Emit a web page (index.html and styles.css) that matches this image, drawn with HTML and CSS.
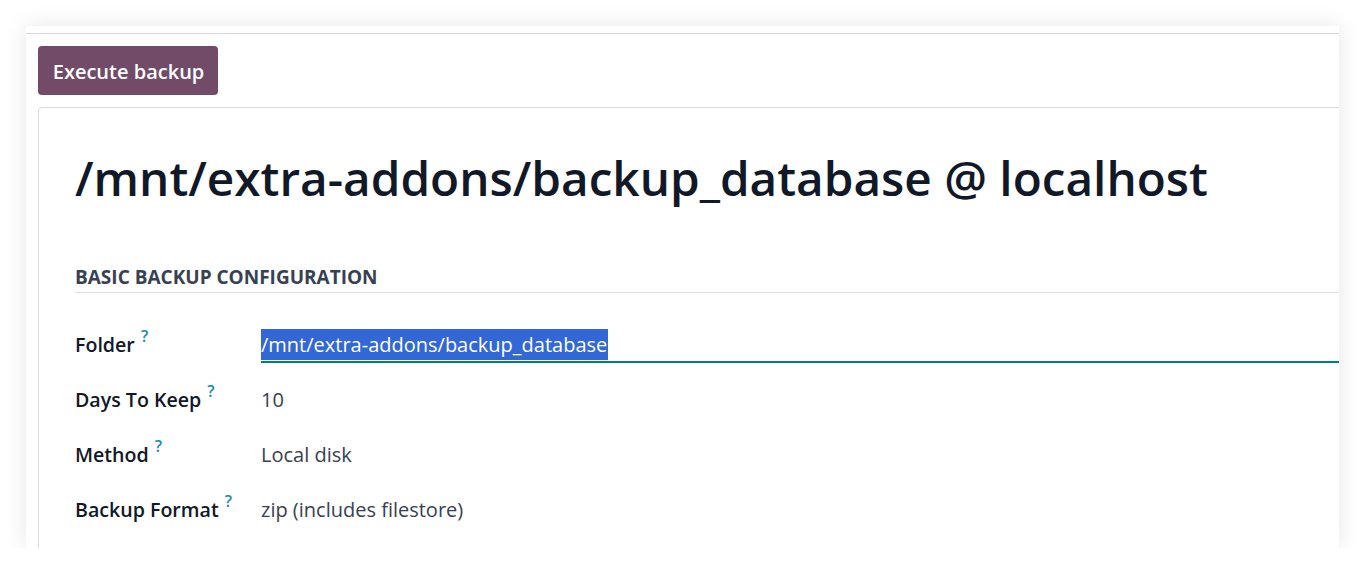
FILE: index.html
```html
<!DOCTYPE html>
<html lang="en">
<head>
<meta charset="utf-8">
<title>Backup</title>
<link rel="stylesheet" href="styles.css">
</head>
<body>
<div class="panel">
  <div class="topbar"></div>
  <div class="actions">
    <button class="btn-primary" type="button">Execute backup</button>
  </div>
  <div class="sheet">
    <h1 class="title">/mnt/extra-addons/backup_database @ localhost</h1>
    <div class="section">
      <div class="section-head">BASIC BACKUP CONFIGURATION</div>
      <div class="rows">
        <div class="row">
          <div class="label">Folder <sup class="help">?</sup></div>
          <div class="value value-input"><span class="selected">/mnt/extra-addons/backup_database</span></div>
        </div>
        <div class="row">
          <div class="label">Days To Keep <sup class="help">?</sup></div>
          <div class="value">10</div>
        </div>
        <div class="row">
          <div class="label">Method <sup class="help">?</sup></div>
          <div class="value">Local disk</div>
        </div>
        <div class="row">
          <div class="label">Backup Format <sup class="help">?</sup></div>
          <div class="value">zip (includes filestore)</div>
        </div>
      </div>
    </div>
  </div>
</div>
</body>
</html>
```

FILE: styles.css
```css
* { box-sizing: border-box; }
html, body {
  margin: 0;
  padding: 0;
  background: #ffffff;
  font-family: "Open Sans", "Noto Sans", sans-serif;
}
.panel {
  margin: 26px 0 0 26px;
  width: 1313px;
  height: 522px;
  background: #ffffff;
  box-shadow: 0 0 22px rgba(0, 0, 0, 0.10);
  overflow: hidden;
}
.topbar {
  height: 8px;
  border-bottom: 1px solid #d8d8d8;
}
.actions {
  padding: 12px 0 0 12px;
}
.btn-primary {
  display: block;
  height: 49px;
  width: 180px;
  background: #714b67;
  color: #ffffff;
  border: none;
  border-radius: 4px;
  font-family: inherit;
  font-size: 20px;
  font-weight: 600;
  padding: 0 0 0 1px;
  line-height: 51px;
}
.sheet {
  margin: 12px -40px 0 12px;
  border: 1px solid #d8dadd;
  border-radius: 4px;
  padding: 27px 36px 0 36px;
  height: 520px;
}
.title {
  margin: 0;
  font-size: 47.7px;
  font-weight: 600;
  color: #111827;
  line-height: 86px;
}
.section {
  margin-top: 44px;
}
.section-head {
  font-size: 19px;
  font-weight: 700;
  color: #374151;
  padding-bottom: 3px;
  border-bottom: 1px solid #dcdfe3;
  line-height: 24px;
}
.rows {
  padding-top: 36px;
  display: flex;
  flex-direction: column;
}
.row {
  display: grid;
  grid-template-columns: 186px 1fr;
  height: 55px;
  align-items: start;
}
.label {
  font-size: 19.6px;
  font-weight: 600;
  color: #111827;
  line-height: 32px;
}
.help {
  color: #1a8aad;
  font-size: 16px;
  font-weight: 600;
  vertical-align: top;
  position: relative;
  top: -9px;
  margin-left: 1px;
}
.value {
  font-size: 20px;
  color: #374151;
  line-height: 32px;
}
.value-input {
  border-bottom: 2px solid #017e84;
  height: 34px;
}
.selected {
  background: #3367d6;
  color: #ffffff;
  display: inline-block;
  line-height: 31px;
  padding-right: 1px;
}
```
